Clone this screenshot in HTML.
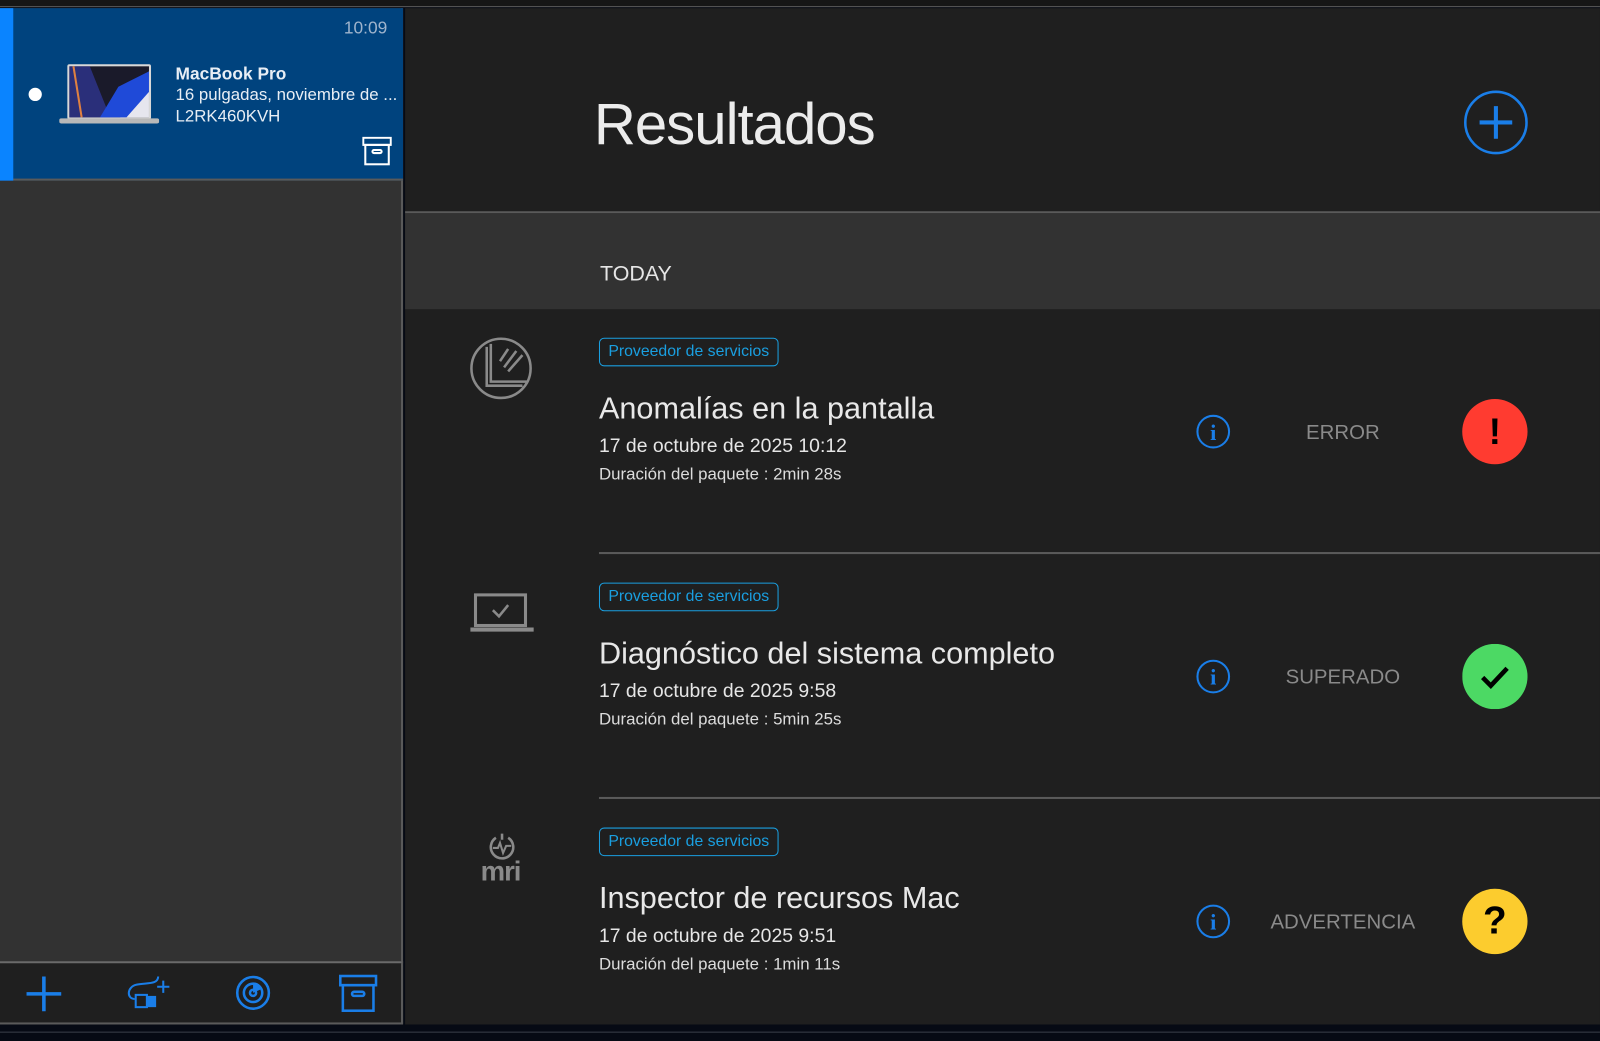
<!DOCTYPE html>
<html><head><meta charset="utf-8"><style>
*{margin:0;padding:0;box-sizing:border-box}
body{width:1600px;height:1041px;background:#060a14;font-family:"Liberation Sans",sans-serif;position:relative;overflow:hidden}
#w{position:absolute;left:0;top:0;width:1568px;height:1020px;transform:scale(1.0204);transform-origin:0 0}
.a{position:absolute}
.top{left:0;top:0;width:1568px;height:7px;background:#161616;border-bottom:1px solid #5a5a5a}
.side{left:0;top:8px;width:395px;height:995px;background:#323232;border-right:2px solid #5a5a5a}
.card{left:0;top:8px;width:395px;height:169px;background:#00437e;border-bottom:2px solid #5a5a5a}
.bar{left:0;top:8px;width:13px;height:169px;background:#0a84ff}
.tb{left:0;top:942px;width:395px;height:62px;background:#1f1f1f;border-top:2px solid #6a6a6a;border-right:2px solid #5a5a5a;border-bottom:2px solid #5a5a5a}
.main{left:397px;top:8px;width:1171px;height:996px;background:#1f1f1f}
.hdrline{left:397px;top:207px;width:1171px;height:2px;background:#5a5a5a}
.sec{left:397px;top:209px;width:1171px;height:94px;background:#323232}
.t{color:#e6e6e6;white-space:nowrap}
.badge{left:587px;width:176px;height:28px;border:1.5px solid #1a9fe0;border-radius:5px;color:#1a9fe0;font-size:15.5px;line-height:25px;text-align:center}
.title{left:587px;font-size:30px;color:#e8e8e8}
.date{left:587px;font-size:19px;color:#e6e6e6}
.dur{left:587px;font-size:16.5px;color:#dcdcdc}
.st{left:1216px;width:200px;text-align:center;font-size:20px;color:#8a8a8a}
.sep{left:587px;width:981px;height:2px;background:#5a5a5a}
</style></head><body><div id="w">
<div class="a top"></div>
<div class="a side"></div>
<div class="a card"></div>
<div class="a bar"></div>
<div class="a t" style="left:337px;top:18px;font-size:17px;color:#9fb4cc">10:09</div>
<div class="a" style="left:28px;top:86px;width:13px;height:13px;border-radius:50%;background:#fff"></div>
<svg class="a" style="left:58px;top:60px" width="98" height="64" viewBox="0 0 98 64">
<rect x="8" y="3" width="82" height="54" rx="2" fill="#d8d8d8"/>
<rect x="10" y="5" width="78" height="50" fill="#1a1a2a"/>
<path d="M10 5 L30 5 L50 55 L10 55Z" fill="#2a2f7a"/>
<path d="M52 40 L88 10 L88 55 L60 55Z" fill="#e6e6ee"/>
<path d="M40 55 L58 25 L88 10 L88 30 L66 55Z" fill="#1f4ad8"/>
<path d="M14 5 L22 55" stroke="#e08040" stroke-width="2"/>
<rect x="0" y="56" width="98" height="5" rx="2" fill="#b8b8b8"/>
</svg>
<div class="a t" style="left:172px;top:63px;font-size:17px;font-weight:bold;color:#e8eef5">MacBook Pro</div>
<div class="a t" style="left:172px;top:84px;font-size:16.5px;color:#e8eef5">16 pulgadas, noviembre de ...</div>
<div class="a t" style="left:172px;top:105px;font-size:16.5px;color:#e8eef5">L2RK460KVH</div>
<svg class="a" style="left:355px;top:134px" width="29" height="29" viewBox="0 0 29 29" fill="none" stroke="#fff" stroke-width="2"><rect x="1" y="1" width="27" height="7"/><rect x="3" y="8" width="23" height="19"/><rect x="10" y="13" width="9" height="3" rx="1.5"/></svg>
<div class="a tb"></div>
<svg class="a" style="left:24px;top:955px" width="38" height="38" viewBox="0 0 38 38" stroke="#1a7ee8" stroke-width="3.5"><path d="M19 2V36M2 19H36"/></svg>
<svg class="a" style="left:124px;top:955px" width="45" height="35" viewBox="0 0 45 35" fill="none" stroke="#1a7ee8" stroke-width="2"><path d="M31 2C31 10 20 8 10 10C0 12 0 24 8 24"/><rect x="9" y="20" width="11" height="12"/><rect x="20" y="22" width="8" height="9" fill="#1a7ee8"/><path d="M36 6V18M30 12H42"/></svg>
<svg class="a" style="left:230px;top:955px" width="36" height="36" viewBox="0 0 36 36" fill="none" stroke="#1a7ee8" stroke-width="2.5"><circle cx="18" cy="18" r="15.5"/><circle cx="18" cy="18" r="9"/><circle cx="18" cy="18" r="3"/><path d="M18 18L18 8A10 10 0 0 1 27 14Z" fill="#1a7ee8" stroke="none"/></svg>
<svg class="a" style="left:332px;top:955px" width="38" height="37" viewBox="0 0 38 37" fill="none" stroke="#1a7ee8" stroke-width="2.5"><rect x="1.5" y="1.5" width="35" height="9"/><rect x="4" y="10.5" width="30" height="25"/><rect x="13" y="17" width="12" height="4" rx="2"/></svg>

<div class="a main"></div>
<div class="a t" style="left:582px;top:89px;font-size:57px;color:#ececec;letter-spacing:-1px">Resultados</div>
<svg class="a" style="left:1434px;top:88px" width="64" height="64" viewBox="0 0 64 64" fill="none" stroke="#1a7ee8"><circle cx="32" cy="32" r="30" stroke-width="2.5"/><path d="M32 16V48M16 32H48" stroke-width="4"/></svg>
<div class="a hdrline"></div>
<div class="a sec"></div>
<div class="a t" style="left:588px;top:257px;font-size:21px">TODAY</div>

<svg class="a" style="left:460px;top:330px" width="62" height="62" viewBox="0 0 62 62" fill="none" stroke="#8a8a8a" stroke-width="2.5"><circle cx="31" cy="31" r="29"/><path d="M17 10V48H52"/><path d="M21 7V44H56"/><path d="M34 30L46 14M38 34L52 18M30 24L38 12"/></svg>
<div class="a badge" style="top:331px">Proveedor de servicios</div>
<div class="a title" style="top:384px">Anomalías en la pantalla</div>
<div class="a date" style="top:427px">17 de octubre de 2025 10:12</div>
<div class="a dur" style="top:456px">Duración del paquete : 2min 28s</div>
<svg class="a" style="left:1172px;top:406px" width="34" height="34" viewBox="0 0 34 34"><circle cx="17" cy="17" r="15.5" fill="none" stroke="#1a7ee8" stroke-width="2"/><text x="17" y="25" text-anchor="middle" font-family="Liberation Serif" font-weight="bold" font-size="22" fill="#1a7ee8">i</text></svg>
<div class="a st" style="top:413px">ERROR</div>
<div class="a" style="left:1433px;top:391px;width:64px;height:64px;border-radius:50%;background:#ff3b30;color:#000;font-size:36px;font-weight:bold;text-align:center;line-height:64px">!</div>
<div class="a sep" style="top:541px"></div>

<svg class="a" style="left:460px;top:580px" width="64" height="42" viewBox="0 0 64 42" fill="none" stroke="#8a8a8a" stroke-width="3"><rect x="6" y="3" width="49" height="30"/><path d="M23 18L29 24L38 13" stroke-width="2.5"/><path d="M1 37H63" stroke-width="4"/></svg>
<div class="a badge" style="top:571px">Proveedor de servicios</div>
<div class="a title" style="top:624px">Diagnóstico del sistema completo</div>
<div class="a date" style="top:667px">17 de octubre de 2025 9:58</div>
<div class="a dur" style="top:696px">Duración del paquete : 5min 25s</div>
<svg class="a" style="left:1172px;top:646px" width="34" height="34" viewBox="0 0 34 34"><circle cx="17" cy="17" r="15.5" fill="none" stroke="#1a7ee8" stroke-width="2"/><text x="17" y="25" text-anchor="middle" font-family="Liberation Serif" font-weight="bold" font-size="22" fill="#1a7ee8">i</text></svg>
<div class="a st" style="top:653px">SUPERADO</div>
<svg class="a" style="left:1433px;top:631px" width="64" height="64" viewBox="0 0 64 64"><circle cx="32" cy="32" r="32" fill="#4cd964"/><path d="M20 33L28 41L44 24" fill="none" stroke="#000" stroke-width="4.5"/></svg>
<div class="a sep" style="top:781px"></div>

<svg class="a" style="left:472px;top:816px" width="40" height="30" viewBox="0 0 40 30" fill="none" stroke="#8a8a8a" stroke-width="2.5"><path d="M14 5A11 11 0 1 0 26 5"/><path d="M11 15H16L18 10L21 20L24 13H29" stroke-width="2"/><path d="M20 1V7"/></svg>
<div class="a t" style="left:471px;top:839px;font-size:27px;font-weight:bold;color:#8a8a8a;letter-spacing:-1px">mri</div>
<div class="a badge" style="top:811px">Proveedor de servicios</div>
<div class="a title" style="top:864px">Inspector de recursos Mac</div>
<div class="a date" style="top:907px">17 de octubre de 2025 9:51</div>
<div class="a dur" style="top:936px">Duración del paquete : 1min 11s</div>
<svg class="a" style="left:1172px;top:886px" width="34" height="34" viewBox="0 0 34 34"><circle cx="17" cy="17" r="15.5" fill="none" stroke="#1a7ee8" stroke-width="2"/><text x="17" y="25" text-anchor="middle" font-family="Liberation Serif" font-weight="bold" font-size="22" fill="#1a7ee8">i</text></svg>
<div class="a st" style="top:893px">ADVERTENCIA</div>
<div class="a" style="left:1433px;top:871px;width:64px;height:64px;border-radius:50%;background:#fccc2e;color:#000;font-size:38px;font-weight:bold;text-align:center;line-height:64px">?</div>

<div class="a" style="left:0;top:1011px;width:1568px;height:1px;background:#3a3e48"></div>
</div></body></html>
